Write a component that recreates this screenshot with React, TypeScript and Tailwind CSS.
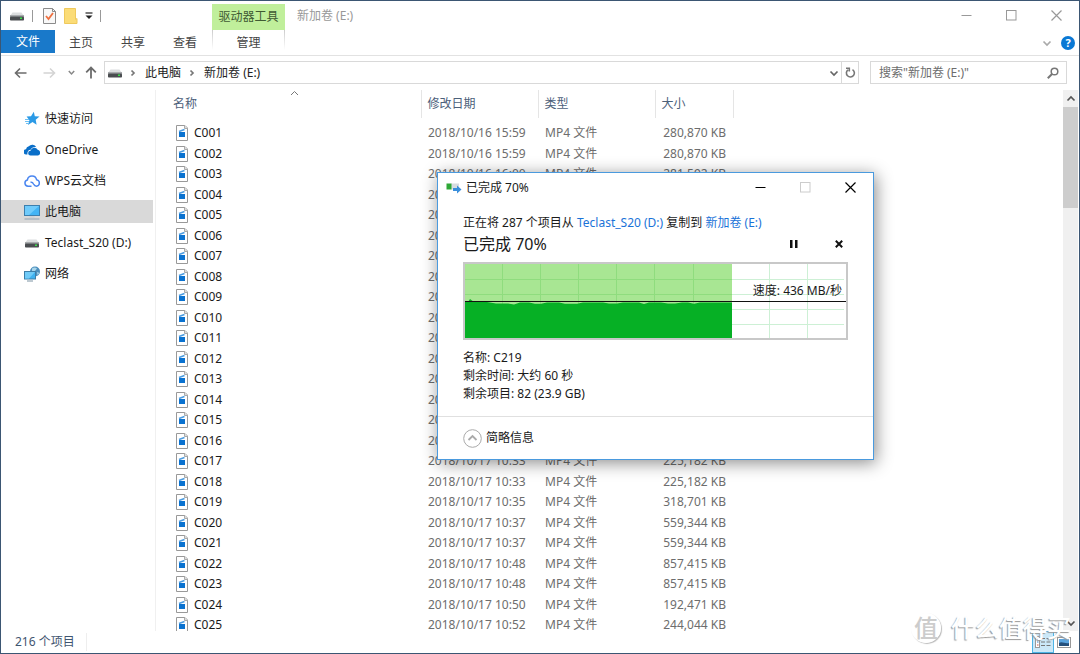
import type { ReactNode } from "react";

type FileRow = { name: string; date: string; size: string };

const FILES: FileRow[] = [
  { name: "C001", date: "2018/10/16 15:59", size: "280,870 KB" },
  { name: "C002", date: "2018/10/16 15:59", size: "280,870 KB" },
  { name: "C003", date: "2018/10/16 16:00", size: "281,592 KB" },
  { name: "C004", date: "2018/10/16 16:00", size: "281,592 KB" },
  { name: "C005", date: "2018/10/16 16:02", size: "302,114 KB" },
  { name: "C006", date: "2018/10/16 16:02", size: "302,114 KB" },
  { name: "C007", date: "2018/10/16 16:05", size: "198,406 KB" },
  { name: "C008", date: "2018/10/16 16:05", size: "198,406 KB" },
  { name: "C009", date: "2018/10/17 10:20", size: "244,718 KB" },
  { name: "C010", date: "2018/10/17 10:20", size: "244,718 KB" },
  { name: "C011", date: "2018/10/17 10:24", size: "310,552 KB" },
  { name: "C012", date: "2018/10/17 10:24", size: "310,552 KB" },
  { name: "C013", date: "2018/10/17 10:28", size: "276,930 KB" },
  { name: "C014", date: "2018/10/17 10:28", size: "276,930 KB" },
  { name: "C015", date: "2018/10/17 10:31", size: "215,064 KB" },
  { name: "C016", date: "2018/10/17 10:31", size: "215,064 KB" },
  { name: "C017", date: "2018/10/17 10:33", size: "225,182 KB" },
  { name: "C018", date: "2018/10/17 10:33", size: "225,182 KB" },
  { name: "C019", date: "2018/10/17 10:35", size: "318,701 KB" },
  { name: "C020", date: "2018/10/17 10:37", size: "559,344 KB" },
  { name: "C021", date: "2018/10/17 10:37", size: "559,344 KB" },
  { name: "C022", date: "2018/10/17 10:48", size: "857,415 KB" },
  { name: "C023", date: "2018/10/17 10:48", size: "857,415 KB" },
  { name: "C024", date: "2018/10/17 10:50", size: "192,471 KB" },
  { name: "C025", date: "2018/10/17 10:52", size: "244,044 KB" },
];

const DriveIcon = () => (
  <svg width="14" height="10" viewBox="0 0 14 10">
    <path d="M2.5 1.5h9L14 5H0z" fill="#dcdedf" />
    <rect y="4" width="14" height="2" fill="#a9acae" />
    <rect y="5.5" width="14" height="4" rx=".8" fill="#4a4d50" />
    <rect x="10" y="6.5" width="2" height="1.5" fill="#3be04a" />
  </svg>
);

const StarIcon = () => (
  <svg width="16" height="16" viewBox="0 0 16 16">
    <path
      d="M9.8.8l1 4.4 4.7.3-3.800 3.200.9 5-4.100-2.600L4 14l1.400-4.800L2.600 5.600l4.400-.3z"
      fill="#2b9ae6"
    />
    <path d="M1 8.500h4M1 10.500h4M2 12.500h3" stroke="#6fc0f2" strokeWidth="1" />
  </svg>
);

const OneDriveIcon = () => (
  <svg width="16" height="16" viewBox="0 0 16 16">
    <path
      d="M3.500 12.500H2.600A2.600 2.600 0 0 1 2 7.200 3.600 3.600 0 0 1 4.800 4.300 4.500 4.500 0 0 1 12.300 5.200C9.500 4.700 7.500 5.800 6.700 7.800 4.300 8 3 9.800 3.500 12.500z"
      fill="#0a6fc9"
    />
    <path
      d="M6.600 13.500a2.400 2.400 0 0 1-.1-4.800 3.900 3.900 0 0 1 7.200-.9 2.900 2.900 0 0 1 .1 5.700z"
      fill="#0a6fc9"
    />
  </svg>
);

const CloudIcon = () => (
  <svg width="16" height="16" viewBox="0 0 16 16" fill="none" stroke="#4a86f0" strokeWidth="1.500">
    <path d="M7.500 13.200H4a3.200 3.200 0 0 1-.6-6.300 4.700 4.700 0 0 1 9.200-.2 3.300 3.300 0 0 1 .1 6.500c-1.700 0-2.500-.8-3.200-2.200C8.800 9.500 7.800 9 6.500 9.300" />
  </svg>
);

const PcIcon = () => (
  <svg width="16" height="16" viewBox="0 0 16 16">
    <rect x=".5" y="1.500" width="15" height="10" fill="#42b4f5" stroke="#3c7fae" />
    <path d="M1 2h14L5 11H1z" fill="#6fcbfb" />
    <path d="M.5 15h15" stroke="#8fa3b3" />
    <path d="M5.500 13h5" stroke="#c4ccd2" />
  </svg>
);

const NetworkIcon = () => (
  <svg width="16" height="16" viewBox="0 0 16 16">
    <circle cx="11" cy="5.500" r="5" fill="#4c8fbd" />
    <path d="M8 2.500c2-1.500 4-1 5 0l-2 2.500-3 1zM13 6l2.500 1-2 2z" fill="#a9d5ea" />
    <rect x=".5" y="5.500" width="11" height="7.500" fill="#3fb2f0" stroke="#3d7ea8" />
    <path d="M1 6h10l-6 6.500H1z" fill="#70cbf8" />
    <path d="M3 15h6" stroke="#7d93a3" />
  </svg>
);

const VideoFileIcon = () => (
  <svg width="12" height="16" viewBox="0 0 12 16">
    <path d="M.5.5h8.500l2.500 2.500v12.500H.5z" fill="#fff" stroke="#999" />
    <path d="M8.500.5v3h3" fill="#ddd" stroke="#aaa" />
    <rect x="3" y="7" width="6" height="5" fill="#0a72d0" />
    <path d="M3 6.500l5.500-2" stroke="#4a9be0" strokeWidth="1.500" />
  </svg>
);

const CopyIcon = () => (
  <svg width="16" height="12" viewBox="0 0 16 12">
    <rect x="5" y="1.500" width="8" height="6" fill="#d8dce0" />
    <rect x=".5" y="1.500" width="5" height="6" fill="#2ea836" />
    <path d="M7 6h4V3.500l4.500 4L11 11.500V9H7z" fill="#3a8fdc" />
  </svg>
);

const Chevron = ({ className = "", d }: { className?: string; d: string }) => (
  <svg width="10" height="10" viewBox="0 0 10 10" fill="none" stroke="currentColor" className={className}>
    <path d={d} strokeWidth="1.700" />
  </svg>
);
const DOWN = "M1.500 3.500L5 7l3.500-3.500";
const UP = "M1.500 6.500L5 3l3.500 3.500";
const RIGHT = "M3.500 2.500L6 5 3.500 7.500";

const Caption = ({ dialog = false }: { dialog?: boolean }) => {
  const button = "flex w-[45px] items-center justify-center";
  return (
    <div className={`flex h-[29px] ${dialog ? "text-black" : "text-[#999]"}`}>
      <button aria-label="最小化" className={button}>
        <svg width="11" height="11" stroke="currentColor">
          <path d="M.5 5.500h10" />
        </svg>
      </button>
      <button aria-label="最大化" disabled={dialog} className={`${button} disabled:text-[#ccc]`}>
        <svg width="11" height="11" fill="none" stroke="currentColor">
          <rect x=".5" y=".5" width="9.500" height="9.500" />
        </svg>
      </button>
      <button aria-label="关闭" className={button}>
        <svg width="11" height="11" stroke="currentColor">
          <path d="M.5.5l10 10M10.500.5l-10 10" strokeWidth="1.200" />
        </svg>
      </button>
    </div>
  );
};

const NAV_ITEMS: { label: string; icon: ReactNode; active?: boolean }[] = [
  { label: "快速访问", icon: <StarIcon /> },
  { label: "OneDrive", icon: <OneDriveIcon /> },
  { label: "WPS云文档", icon: <CloudIcon /> },
  { label: "此电脑", icon: <PcIcon />, active: true },
  { label: "Teclast_S20 (D:)", icon: <DriveIcon /> },
  { label: "网络", icon: <NetworkIcon /> },
];

const Ribbon = () => (
  <header>
    <div className="flex h-[29px]">
      <div className="flex w-[211px] items-center pl-[9px]">
        <DriveIcon />
        <span className="ml-2 h-3 w-px bg-[#999]" />
        <button aria-label="属性" className="ml-[10px]">
          <svg width="13" height="16" viewBox="0 0 13 16">
            <path d="M.5.5h9l3 3v12H.5z" fill="#f8f8f8" stroke="#8b8b8b" />
            <path d="M9.500.5v3h3" fill="none" stroke="#8b8b8b" />
            <path d="M3 8l2.500 3L10 5" fill="none" stroke="#ee7040" strokeWidth="1.800" />
          </svg>
        </button>
        <button aria-label="新建文件夹" className="ml-2">
          <svg width="14" height="16" viewBox="0 0 14 16">
            <path d="M.5.5h11v11l1.500-1v5H.5z" fill="#fbdc77" stroke="#efc95c" />
          </svg>
        </button>
        <button aria-label="自定义快速访问工具栏" className="ml-[7px]">
          <svg width="8" height="8" viewBox="0 0 8 8">
            <path d="M.5 1h7" stroke="#222" strokeWidth="1.200" />
            <path d="M.5 3.500h7L4 7z" fill="#222" />
          </svg>
        </button>
        <span className="ml-[7px] h-3 w-px bg-[#999]" />
      </div>
      <div className="flex h-[26px] w-[73px] items-center justify-center self-end bg-[#c0ef9b] text-[#3f5a33]">
        驱动器工具
      </div>
      <h1 className="flex-1 self-center pl-3 text-[#999]">新加卷 (E:)</h1>
      <Caption />
    </div>
    <div className="flex h-[26px] border-b border-[#e2e2e2] text-[#444]">
      <button className="h-[23px] w-[54px] bg-[#1979ca] text-white">文件</button>
      <button className="h-[25px] w-[52px]">主页</button>
      <button className="h-[25px] w-[52px]">共享</button>
      <button className="h-[25px] w-[52px]">查看</button>
      <div className="ml-px flex h-5 w-px bg-gradient-to-b from-[#ccc] to-white" />
      <button className="h-[25px] w-[71px]">管理</button>
      <div className="flex h-5 w-px bg-gradient-to-b from-[#ccc] to-white" />
      <button aria-label="展开功能区" className="ml-auto text-[#aaa]">
        <Chevron className="mr-[9px]" d={DOWN} />
      </button>
      <button
        aria-label="帮助"
        className="mt-[6px] mr-1 size-[14px] rounded-full bg-[#0a78d4] text-[11px] leading-[14px] font-bold text-white"
      >
        ?
      </button>
    </div>
  </header>
);

const AddressRow = () => (
  <div className="flex h-[34px] items-start pt-[5px] pr-3">
    <div className="flex h-[23px] w-[103px] items-center pl-2 text-[#666]">
      <button aria-label="后退" className="flex w-[22px] justify-center">
        <svg width="13" height="12" viewBox="0 0 13 12" fill="none" stroke="#6c6c6c" strokeWidth="1.600">
          <path d="M12.500 6H1.500M6 1.500L1.500 6 6 10.500" />
        </svg>
      </button>
      <button aria-label="前进" className="ml-[7px] flex w-[22px] justify-center">
        <svg width="13" height="12" viewBox="0 0 13 12" fill="none" stroke="#d4d4d4" strokeWidth="1.600">
          <path d="M.5 6h11M7 1.500L11.500 6 7 10.500" />
        </svg>
      </button>
      <button aria-label="最近浏览的位置" className="ml-[3px] flex w-4 justify-center">
        <svg width="7" height="6" viewBox="0 0 7 6" fill="none" stroke="#888" strokeWidth="1.500">
          <path d="M.8 1l2.700 3L6.200 1" />
        </svg>
      </button>
      <button aria-label="向上" className="ml-px flex w-[22px] justify-center">
        <svg width="12" height="13" viewBox="0 0 12 13" fill="none" stroke="#6c6c6c" strokeWidth="1.800">
          <path d="M6 12.500v-11M1.200 6.300L6 1.500l4.800 4.800" />
        </svg>
      </button>
    </div>
    <nav className="flex h-[23px] flex-1 items-center border border-[#d9d9d9] pl-[3px] text-[#222]">
      <DriveIcon />
      <Chevron className="ml-[6px] text-[#777]" d={RIGHT} />
      <button className="ml-[7px]">此电脑</button>
      <Chevron className="ml-[6px] text-[#777]" d={RIGHT} />
      <button className="ml-[7px]">新加卷 (E:)</button>
      <button aria-label="以前的位置" className="ml-auto px-[2px] text-[#666]">
        <Chevron d={DOWN} />
      </button>
      <button
        aria-label="刷新"
        className="flex h-full w-[17px] items-center justify-center border-l border-[#d9d9d9]"
      >
        <svg width="11" height="12" viewBox="0 0 11 12" fill="none" stroke="#777" strokeWidth="1.600">
          <path d="M7.500 2.600A4 4 0 1 1 3 2.800M1 1.200h3.300v3.300" />
        </svg>
      </button>
    </nav>
    <label className="ml-[11px] flex h-[23px] w-[197px] items-center border border-[#d9d9d9] pr-[7px] pl-2">
      <input
        type="text"
        aria-label="搜索"
        placeholder={'搜索"新加卷 (E:)"'}
        className="min-w-0 flex-1 outline-none placeholder:text-[#6d6d6d]"
      />
      <svg width="12" height="12" viewBox="0 0 12 12" fill="none" stroke="#777" strokeWidth="1.500">
        <circle cx="7.500" cy="4.500" r="3.300" />
        <path d="M5 7L.8 11.200" strokeWidth="2" />
      </svg>
    </label>
  </div>
);

const Sidebar = () => (
  <nav className="w-[155px] shrink-0 border-r border-[#f0f0f0] pt-[17px]">
    <ul className="mr-[2px] flex flex-col gap-2">
      {NAV_ITEMS.map(({ label, icon, active }) => (
        <li key={label}>
          <a
            href="#"
            className={`flex h-[23px] items-center pl-[23px] text-[#1a1a1a] ${active ? "bg-[#d9d9d9]" : ""}`}
          >
            <span className="mr-[5px] flex w-4 justify-center">{icon}</span>
            {label}
          </a>
        </li>
      ))}
    </ul>
  </nav>
);

const FileTable = () => (
  <div className="min-w-0 flex-1 overflow-hidden">
    <table className="w-full table-fixed border-collapse">
      <colgroup>
        <col className="w-[265px]" />
        <col className="w-[117px]" />
        <col className="w-[117px]" />
        <col className="w-[78px]" />
        <col />
      </colgroup>
      <thead>
        <tr className="h-7 text-left text-[#4c607a]">
          <th className="relative border-r border-[#e5e5e5] p-0 pl-[17px] font-normal">
            名称
            <svg
              className="absolute top-0 left-[134px]"
              width="9"
              height="6"
              viewBox="0 0 9 6"
              fill="none"
              stroke="#777"
            >
              <path d="M1 5l3.500-3.500L8 5" />
            </svg>
          </th>
          <th className="border-r border-[#e5e5e5] p-0 pl-[6px] font-normal">修改日期</th>
          <th className="border-r border-[#e5e5e5] p-0 pl-[6px] font-normal">类型</th>
          <th className="border-r border-[#e5e5e5] p-0 pl-[6px] font-normal">大小</th>
          <th className="p-0" />
        </tr>
      </thead>
      <tbody className="leading-[14px] text-[#6d6d6d] before:block before:h-[5px]">
        {FILES.map((file) => (
          <tr key={file.name} className="h-5 even:h-[21px]">
            <td className="p-0 pl-5 text-[#1a1a1a]">
              <span className="flex items-center gap-[6px]">
                <VideoFileIcon />
                {file.name}
              </span>
            </td>
            <td className="p-0 pl-[7px]">{file.date}</td>
            <td className="p-0 pl-[7px]">MP4 文件</td>
            <td className="p-0 pr-[7px] text-right">{file.size}</td>
            <td className="p-0" />
          </tr>
        ))}
      </tbody>
    </table>
  </div>
);

const ScrollBar = () => (
  <div className="mr-px flex w-[15px] shrink-0 flex-col bg-[#f0f0f0] text-[#555]">
    <button aria-label="向上滚动" className="flex h-[17px] items-center justify-center">
      <Chevron d={UP} />
    </button>
    <div className="h-[101px] bg-[#cdcdcd]" />
    <button aria-label="向下滚动" className="mt-auto flex h-[17px] items-center justify-center">
      <Chevron d={DOWN} />
    </button>
  </div>
);

const StatusBar = () => (
  <footer className="flex h-[22px] shrink-0 items-center pr-2 pl-[14px] text-[#3f5570]">
    <span className="border-r border-[#eee] pr-[11px]">216 个项目</span>
    <button
      aria-label="详细信息"
      className="ml-auto flex h-[22px] w-[22px] items-center justify-center border border-[#4db4e6] bg-[#cbe8f8]"
    >
      <svg width="16" height="12" viewBox="0 0 16 12">
        <rect x=".5" y=".5" width="4" height="11" fill="#fff" stroke="#999" />
        <path d="M2 3h1.500M2 9h1.500" stroke="#d0553f" />
        <path d="M2 6h1.500" stroke="#3a7fc0" />
        <path d="M6 2.500h4M11.500 2.500h4M6 6h4M11.500 6h4M6 9.500h4M11.500 9.500h4" stroke="#777" />
      </svg>
    </button>
    <button aria-label="大缩略图" className="ml-[3px]">
      <svg width="14" height="11" viewBox="0 0 14 11">
        <rect x=".5" y=".5" width="13" height="10" fill="#fff" stroke="#999" />
        <rect x="2" y="2" width="10" height="7" fill="#5aa5e0" />
        <path d="M2 6c3-2 6 1 10 0v3H2z" fill="#25507c" />
      </svg>
    </button>
  </footer>
);

const COLUMNS = [38, 76, 114, 152, 190, 229, 267, 305, 343];
const ROWS = [15, 30, 45, 60];

const SpeedChart = () => (
  <div className="relative mt-[6px] border-2 border-[#c8c8c8]">
    <svg className="block h-[74px] w-full" viewBox="0 0 381 74" preserveAspectRatio="none">
      <rect width="381" height="74" fill="#fff" />
      <g stroke="#cdf0d5">
        {COLUMNS.map((x) => (
          <path key={x} d={`M${x - 0.5} 0v74`} />
        ))}
        {ROWS.map((y) => (
          <path key={y} d={`M0 ${y + 0.5}h379`} />
        ))}
      </g>
      <rect width="267" height="74" fill="#a8e693" />
      <g stroke="#8fdc7e">
        {COLUMNS.slice(0, 6).map((x) => (
          <path key={x} d={`M${x - 0.5} 0v74`} />
        ))}
        {ROWS.map((y) => (
          <path key={y} d={`M0 ${y + 0.5}h267`} />
        ))}
      </g>
      <path
        d="M0 38h3l2-3 4 3h13l9 1.500h12l6 1 6-2h9l6 1.200h6l6-1.200h12l6 1.200h12l6-1.200h20l6 1h8l6-1h16l5 1.500 5-1.500h12l7 1h7l7-1h6l6 1.200 6-1.200H267V74H0z"
        fill="#06b025"
      />
      <path d="M0 37.500h381" stroke="#111" />
    </svg>
    <span className="absolute right-1 bottom-[38px] text-[#1a1a1a]">速度: 436 MB/秒</span>
  </div>
);

const CopyDialog = () => (
  <section
    role="dialog"
    aria-label="已完成 70%"
    className="absolute top-[171px] left-[436px] w-[437px] border border-[#4a9ade] bg-white text-[#1a1a1a] shadow-[2px_3px_16px_rgba(0,0,0,0.45)]"
  >
    <div className="flex h-[30px] pl-2">
      <div className="flex flex-1 items-center gap-1">
        <CopyIcon />
        <span>已完成 70%</span>
      </div>
      <Caption dialog />
    </div>
    <div className="px-[25px] pt-[11px] pb-[13px]">
      <p>
        正在将 287 个项目从{" "}
        <a href="#" className="text-[#1a73d8]">
          Teclast_S20 (D:)
        </a>{" "}
        复制到{" "}
        <a href="#" className="text-[#1a73d8]">
          新加卷 (E:)
        </a>
      </p>
      <div className="flex h-6 items-center">
        <h2 className="flex-1 text-base">已完成 70%</h2>
        <button aria-label="暂停" className="mr-[27px] flex w-[18px] justify-center">
          <svg width="8" height="8" fill="#111">
            <path d="M0 0h2.500v8H0zM5 0h2.500v8H5z" />
          </svg>
        </button>
        <button aria-label="取消" className="flex w-[18px] justify-center">
          <svg width="8" height="8" stroke="#111" strokeWidth="2">
            <path d="M.8.8l6.400 6.400M7.200.8L.8 7.200" />
          </svg>
        </button>
      </div>
      <SpeedChart />
      <div className="mt-[9px]">
        <p>名称: C219</p>
        <p>剩余时间: 大约 60 秒</p>
        <p>剩余项目: 82 (23.9 GB)</p>
      </div>
    </div>
    <div className="flex h-[43px] items-center border-t border-[#e0e0e0] pl-[25px]">
      <button className="flex items-center gap-1">
        <svg width="19" height="19" viewBox="0 0 19 19" fill="none" stroke="#aaa">
          <circle cx="9.500" cy="9.500" r="8.800" />
          <path d="M5.500 11l4-4 4 4" strokeWidth="1.800" />
        </svg>
        简略信息
      </button>
    </div>
  </section>
);

const Watermark = () => (
  <div className="pointer-events-none absolute right-2 bottom-[10px] flex items-center gap-[10px] font-medium text-white [text-shadow:-1px_1px_1px_#999]">
    <span className="flex size-[30px] items-center justify-center rounded-full border border-white text-[24px] leading-[30px] text-[#ccc] shadow-[1px_1px_1px_#bbb] [text-shadow:none]">
      值
    </span>
    <span className="text-[24px] leading-[30px]">什么值得买</span>
  </div>
);

export default function App() {
  return (
    <div className="relative flex h-screen flex-col overflow-hidden border border-[#3b5673] bg-white font-['Noto_Sans','Noto_Sans_CJK_SC',sans-serif] text-xs leading-[18px]">
      <Ribbon />
      <AddressRow />
      <main className="flex min-h-0 flex-1">
        <Sidebar />
        <FileTable />
        <ScrollBar />
      </main>
      <StatusBar />
      <CopyDialog />
      <Watermark />
    </div>
  );
}
